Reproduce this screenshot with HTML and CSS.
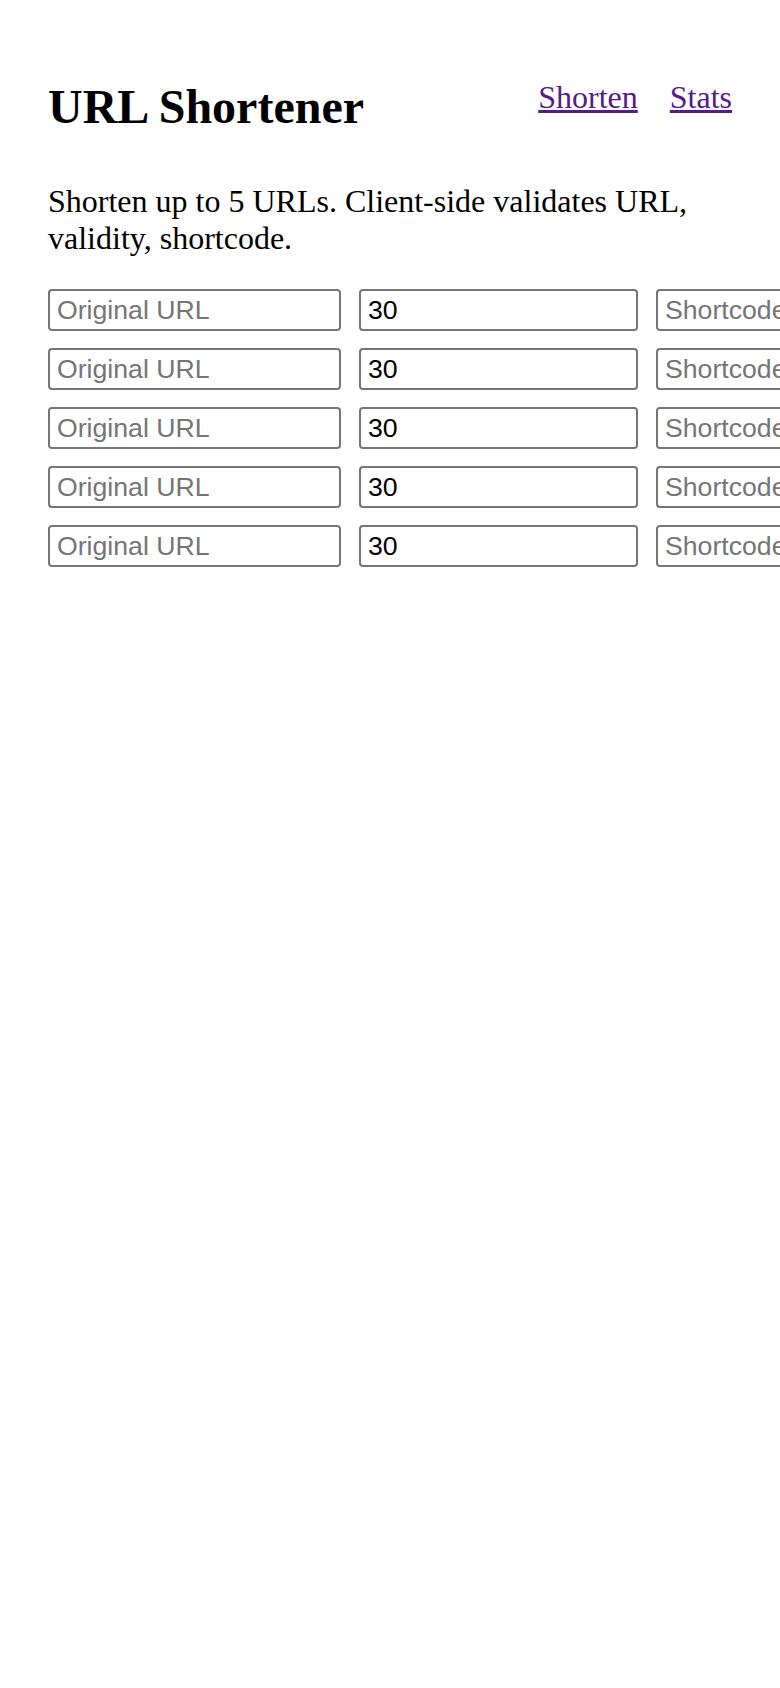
FILE: index.html
```html
<!DOCTYPE html>
<html lang="en">
<head>
<meta charset="utf-8">
<title>URL Shortener</title>
<link rel="stylesheet" href="styles.css">
</head>
<body>
<div class="page">
  <header class="header">
    <h1 class="title">URL Shortener</h1>
    <nav class="nav">
      <a class="nav-link" href="#">Shorten</a>
      <a class="nav-link" href="#">Stats</a>
    </nav>
  </header>
  <p class="intro">Shorten up to 5 URLs. Client-side validates URL, validity, shortcode.</p>
  <form class="rows">
    <div class="row">
      <input class="field field-url" type="text" placeholder="Original URL">
      <input class="field field-validity" type="text" value="30">
      <input class="field field-code" type="text" placeholder="Shortcode (optional)">
    </div>
    <div class="row">
      <input class="field field-url" type="text" placeholder="Original URL">
      <input class="field field-validity" type="text" value="30">
      <input class="field field-code" type="text" placeholder="Shortcode (optional)">
    </div>
    <div class="row">
      <input class="field field-url" type="text" placeholder="Original URL">
      <input class="field field-validity" type="text" value="30">
      <input class="field field-code" type="text" placeholder="Shortcode (optional)">
    </div>
    <div class="row">
      <input class="field field-url" type="text" placeholder="Original URL">
      <input class="field field-validity" type="text" value="30">
      <input class="field field-code" type="text" placeholder="Shortcode (optional)">
    </div>
    <div class="row">
      <input class="field field-url" type="text" placeholder="Original URL">
      <input class="field field-validity" type="text" value="30">
      <input class="field field-code" type="text" placeholder="Shortcode (optional)">
    </div>
  </form>
</div>
</body>
</html>
```

FILE: styles.css
```css
html, body {
  margin: 0;
  padding: 0;
  background: #ffffff;
  overflow-x: hidden;
}

body {
  font-family: "Liberation Serif", "Times New Roman", serif;
  color: #000000;
}

.page {
  padding: 79px 48px 0 48px;
}

.header {
  display: flex;
  justify-content: space-between;
  align-items: flex-start;
}

.title {
  margin: 0;
  font-size: 48px;
  font-weight: bold;
  line-height: normal;
}

.nav {
  display: flex;
  gap: 32px;
}

.nav-link {
  font-size: 32px;
  line-height: normal;
  color: #551a8b;
  text-decoration: underline;
}

.intro {
  margin: 49px 0 32px 0;
  font-size: 32px;
  line-height: 37px;
}

.rows {
  display: flex;
  flex-direction: column;
  gap: 17px;
}

.row {
  display: flex;
  gap: 18px;
}

.field {
  box-sizing: border-box;
  flex: 0 0 auto;
  height: 42px;
  margin: 0;
  padding: 2px 6px 2px 7px;
  border: 2px solid #767676;
  border-radius: 4px;
  font-family: "Liberation Sans", Arial, sans-serif;
  font-size: 26.67px;
  color: #000000;
  background: #ffffff;
}

.field::placeholder {
  color: #757575;
  opacity: 1;
}

.field-url {
  width: 293px;
}

.field-validity {
  width: 279px;
}

.field-code {
  width: 293px;
}
```
